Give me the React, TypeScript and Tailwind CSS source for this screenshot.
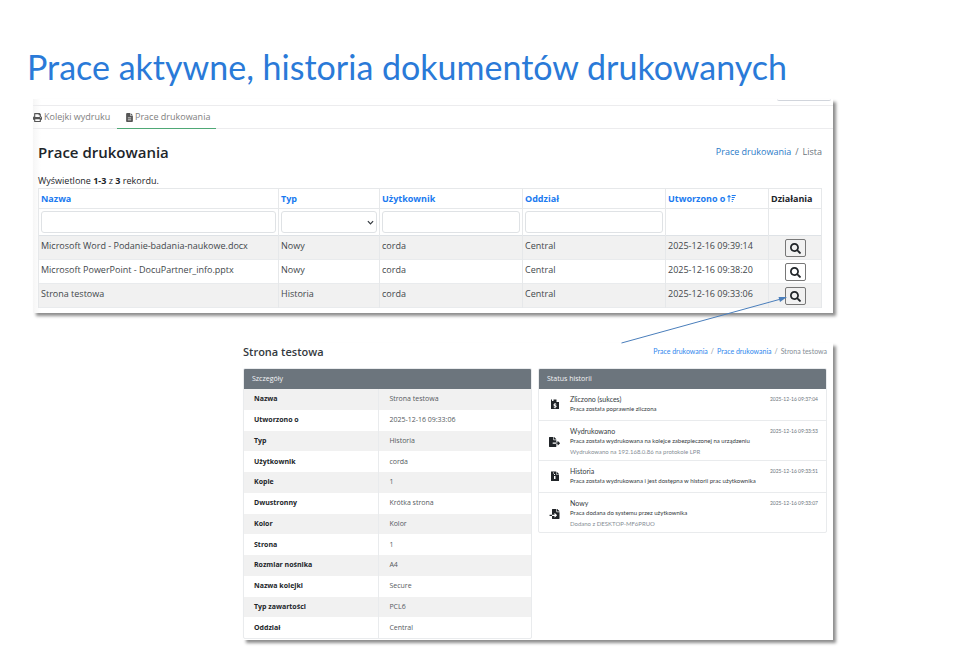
import type { ReactNode } from 'react';
import { FaPrint, FaSearch, FaFileExport, FaFileImport } from 'react-icons/fa';
import { FaArrowUpWideShort, FaFileLines } from 'react-icons/fa6';

const jobs = [
  { id: 1, name: 'Microsoft Word - Podanie-badania-naukowe.docx', type: 'Nowy', user: 'corda', branch: 'Central', created: '2025-12-16 09:39:14' },
  { id: 2, name: 'Microsoft PowerPoint - DocuPartner_info.pptx', type: 'Nowy', user: 'corda', branch: 'Central', created: '2025-12-16 09:38:20' },
  { id: 3, name: 'Strona testowa', type: 'Historia', user: 'corda', branch: 'Central', created: '2025-12-16 09:33:06' },
];

const details = [
  { label: 'Nazwa', value: 'Strona testowa' },
  { label: 'Utworzono o', value: '2025-12-16 09:33:06' },
  { label: 'Typ', value: 'Historia' },
  { label: 'Użytkownik', value: 'corda' },
  { label: 'Kopie', value: '1' },
  { label: 'Dwustronny', value: 'Krótka strona' },
  { label: 'Kolor', value: 'Kolor' },
  { label: 'Strona', value: '1' },
  { label: 'Rozmiar nośnika', value: 'A4' },
  { label: 'Nazwa kolejki', value: 'Secure' },
  { label: 'Typ zawartości', value: 'PCL6' },
  { label: 'Oddział', value: 'Central' },
];

function CountedIcon() {
  return (
    <svg viewBox="0 0 16 20" className="h-[10px] w-2" aria-hidden="true">
      <path fill="currentColor" fillRule="evenodd" d="M0 1h2v3h3V1h6l5 5v14H0zM11 1v5h5zM7 8v1.500C4 10 4 14 8 14.500c1.500.5 1 1.500-2.500.7V17H7v1.500h2V17c3.500-.8 3-4.500-1-5-1.500-.4-1-1.300 2.500-.6V9.500H9V8z" />
    </svg>
  );
}

function HistoryIcon() {
  return (
    <svg viewBox="0 0 16 20" className="h-[10px] w-2" aria-hidden="true">
      <path fill="currentColor" fillRule="evenodd" d="M0 1h10v6h6v13H0zM11 1l5 5h-5zM4 3v2h2V3zM6 6v2h2V6zM6 10v6h3v-6z" />
    </svg>
  );
}

interface StatusEntry {
  id: string;
  icon: ReactNode;
  title: string;
  text: string;
  note?: string;
  time: string;
}

const statuses: StatusEntry[] = [
  {
    id: 'counted',
    icon: <CountedIcon />,
    title: 'Zliczono (sukces)',
    text: 'Praca została poprawnie zliczona',
    time: '2025-12-16 09:37:04',
  },
  {
    id: 'printed',
    icon: <FaFileExport className="h-[10px] w-[11px]" />,
    title: 'Wydrukowano',
    text: 'Praca została wydrukowana na kolejce zabezpieczonej na urządzeniu',
    note: 'Wydrukowano na 192.168.0.86 na protokole LPR',
    time: '2025-12-16 09:33:53',
  },
  {
    id: 'history',
    icon: <HistoryIcon />,
    title: 'Historia',
    text: 'Praca została wydrukowana i jest dostępna w historii prac użytkownika',
    time: '2025-12-16 09:33:51',
  },
  {
    id: 'new',
    icon: <FaFileImport className="h-[10px] w-[11px]" />,
    title: 'Nowy',
    text: 'Praca dodana do systemu przez użytkownika',
    note: 'Dodano z DESKTOP-MF6PRUO',
    time: '2025-12-16 09:33:07',
  },
];

function JobsPanel() {
  return (
    <section className="bg-linear-to-r from-[#f6f6f6] from-0% to-white to-1% pb-[5px] shadow-[3px_3px_3px_rgba(0,0,0,0.45)]">
      <div className="flex h-[6px] justify-end pr-[2px]">
        <div className="h-[2px] w-[54px] rounded-b border-b border-gray-300" />
      </div>
      <nav className="flex h-6 border-y border-[#ececee] text-[9px] text-[#808080]">
        <a href="#queues" className="flex w-[84px] items-center gap-[2px]">
          <FaPrint className="size-[9px] text-[#555]" />
          Kolejki wydruku
        </a>
        <a href="#jobs" className="-mb-px flex w-[99px] items-center gap-px border-b border-[#4fa876] pl-2">
          <FaFileLines className="size-[9px] text-[#555]" />
          Prace drukowania
        </a>
      </nav>

      <div className="pr-[11px] pl-[5px]">
        <header className="flex h-[46px] items-center justify-between">
          <h2 className="text-[15px] font-semibold text-[#212529]">Prace drukowania</h2>
          <div className="flex gap-1 text-[9px] text-[#6c757d]">
            <a href="#jobs" className="text-[#2a7bc8]">Prace drukowania</a>
            <span>/</span>
            <span>Lista</span>
          </div>
        </header>
        <p className="pb-px text-[9px] leading-3 text-[#212529]">
          Wyświetlone <b>1-3</b> z <b>3</b> rekordu.
        </p>

        <table className="w-full table-fixed border-collapse text-left text-[9px] leading-3 text-[#42474b] [&_td]:border-x [&_td]:border-[#e6e8ea] [&_td]:px-[2px] [&_th]:border [&_th]:border-[#e6e8ea] [&_th]:px-[2px]">
          <colgroup>
            <col className="w-[240px]" />
            <col className="w-[101px]" />
            <col />
            <col />
            <col className="w-[103px]" />
            <col className="w-[53px]" />
          </colgroup>
          <thead>
            <tr className="h-5 text-[#1a7af0]">
              <th><a href="#name">Nazwa</a></th>
              <th><a href="#type">Typ</a></th>
              <th><a href="#user">Użytkownik</a></th>
              <th><a href="#branch">Oddział</a></th>
              <th>
                <a href="#created" className="flex items-center gap-[2px] whitespace-nowrap">
                  Utworzono o <FaArrowUpWideShort className="size-[9px]" />
                </a>
              </th>
              <th className="text-[#212529]">Działania</th>
            </tr>
            <tr className="h-[27px] border-y border-[#dee2e6]">
              <td><input aria-label="Nazwa" className="block h-[22px] w-full rounded-[3px] border border-[#dfe2e5] bg-white px-1" /></td>
              <td>
                <div className="relative">
                  <select aria-label="Typ" className="block h-[22px] w-full appearance-none rounded-[3px] border border-[#dfe2e5] bg-white px-1">
                    <option></option>
                    <option>Nowy</option>
                    <option>Historia</option>
                  </select>
                  <svg viewBox="0 0 8 5" className="pointer-events-none absolute top-[9px] right-[3px] h-[5px] w-[7px]" fill="none" stroke="#343a40" strokeWidth="1.4">
                    <path d="M1 1l3 3 3-3" />
                  </svg>
                </div>
              </td>
              <td><input aria-label="Użytkownik" className="block h-[22px] w-full rounded-[3px] border border-[#dfe2e5] bg-white px-1" /></td>
              <td><input aria-label="Oddział" className="block h-[22px] w-full rounded-[3px] border border-[#dfe2e5] bg-white px-1" /></td>
              <td />
              <td />
            </tr>
          </thead>
          <tbody>
            {jobs.map(job => (
              <tr key={job.id} className="h-6 border-b border-[#e9ebed] align-top odd:bg-[#f1f1f1]">
                <td className="truncate pt-1">{job.name}</td>
                <td className="pt-1">{job.type}</td>
                <td className="pt-1">{job.user}</td>
                <td className="pt-1">{job.branch}</td>
                <td className="pt-1 whitespace-nowrap">{job.created}</td>
                <td className="pt-[3px]">
                  <button
                    aria-label={`Szczegóły: ${job.name}`}
                    className="mx-auto flex h-[18px] w-[21px] items-center justify-center rounded-[2px] border border-[#777] text-[#212529]"
                  >
                    <FaSearch className="size-[11px]" />
                  </button>
                </td>
              </tr>
            ))}
          </tbody>
        </table>
      </div>
    </section>
  );
}

function DetailsCard() {
  return (
    <div className="flex-1 overflow-hidden rounded-[2px] border border-[#e9ebed]">
      <h3 className="flex h-5 items-center bg-[#6c757d] px-2 text-[7px] text-gray-100">Szczegóły</h3>
      <table className="h-[249px] w-full table-fixed border-collapse text-left text-[7px] leading-3">
        <tbody>
          {details.map(row => (
            <tr key={row.label} className="odd:bg-[#f1f1f1]">
              <th className="w-[47%] border-r border-[#e9ebed] px-[10px] text-[#212529]">{row.label}</th>
              <td className="px-[10px] text-[#555a5e]">{row.value}</td>
            </tr>
          ))}
        </tbody>
      </table>
    </div>
  );
}

function StatusCard() {
  return (
    <div className="flex-1 overflow-hidden rounded-[2px] border border-[#e9ebed]">
      <h3 className="flex h-5 items-center bg-[#6c757d] px-2 text-[7px] text-gray-100">Status historii</h3>
      <ul className="font-['Lato',sans-serif] text-[6px] leading-[9px]">
        {statuses.map(entry => (
          <li
            key={entry.id}
            className={`flex border-b border-[#e9ebed] pt-[6px] pr-2 last:border-b-0 ${entry.note ? 'pb-1' : 'pb-[7px]'}`}
          >
            <span className="flex w-[31px] shrink-0 items-center justify-center text-[#212529]">{entry.icon}</span>
            <div className="min-w-0 flex-1">
              <div className="flex items-center justify-between">
                <span className="text-[7px] leading-[9px] text-[#343a40]">{entry.title}</span>
                <time className="text-[5px] leading-[9px] text-[#6c757d]">{entry.time}</time>
              </div>
              <p className="text-[#343a40]">{entry.text}</p>
              {entry.note && <p className="mt-[2px] text-[#868e96]">{entry.note}</p>}
            </div>
          </li>
        ))}
      </ul>
    </div>
  );
}

function JobDetailsPanel() {
  return (
    <section className="mt-[30px] ml-[210px] bg-white pr-[6px] pb-px shadow-[3px_3px_3px_rgba(0,0,0,0.45)]">
      <header className="flex h-[25px] items-start justify-between">
        <h2 className="text-[11px] leading-[18px] font-semibold text-[#343a40]">Strona testowa</h2>
        <div className="flex gap-[3px] font-['Lato',sans-serif] text-[7px] leading-4 text-[#868e96]">
          <a href="#home" className="text-[#2f87ee]">Prace drukowania</a>
          <span>/</span>
          <a href="#jobs" className="text-[#2f87ee]">Prace drukowania</a>
          <span>/</span>
          <span>Strona testowa</span>
        </div>
      </header>
      <div className="flex items-start gap-[6px]">
        <DetailsCard />
        <StatusCard />
      </div>
    </section>
  );
}

export default function App() {
  return (
    <main className="min-h-screen bg-white pt-[44px] pr-[123px] pb-2 pl-[33px] font-['Open_Sans',sans-serif]">
      <h1 className="mb-[9px] -ml-[6px] font-['Lato',sans-serif] text-[34px] leading-[46px] whitespace-nowrap text-[#2a7ad8]">
        Prace aktywne, historia dokumentów drukowanych
      </h1>
      <div className="relative">
        <JobsPanel />
        <JobDetailsPanel />
        {/* Arrow from the details view to the opened row */}
        <svg viewBox="0 0 168 48" className="pointer-events-none absolute top-[197px] right-[44px] h-12 w-[168px]" fill="none">
          <path d="M0.500 47L160 3" stroke="#4a7ebb" />
          <path d="M166 1l-7 5-1.500-5z" fill="#4a7ebb" />
        </svg>
      </div>
    </main>
  );
}
